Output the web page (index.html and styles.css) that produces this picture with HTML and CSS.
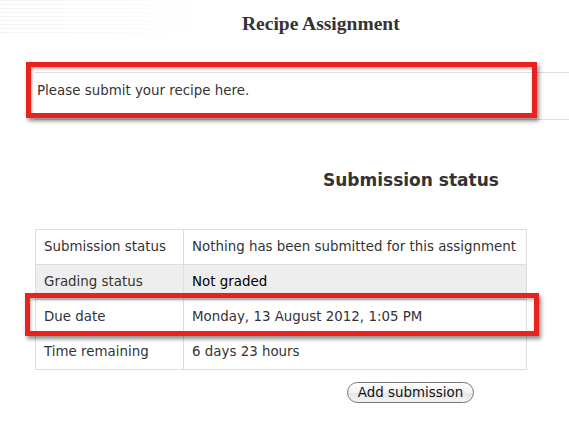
FILE: index.html
```html
<!DOCTYPE html>
<html lang="en">
<head>
    <meta charset="UTF-8">
    <title>Recipe Assignment</title>
    <link rel="stylesheet" href="styles.css">
</head>
<body>

    <!-- Assignment title -->
    <h2 class="page-title">Recipe Assignment</h2>

    <!-- Intro text, marked with a red box -->
    <div class="intro">
        <div class="intro-text">Please submit your recipe here.</div>
        <div class="mark mark-intro"></div>
    </div>

    <h3 class="status-heading">Submission status</h3>

    <!-- Status table -->
    <div class="table-wrap">
        <table class="status-table">
            <tr>
                <td class="label">Submission status</td>
                <td>Nothing has been submitted for this assignment</td>
            </tr>
            <tr class="shaded">
                <td class="label">Grading status</td>
                <td class="strong">Not graded</td>
            </tr>
            <tr>
                <td class="label">Due date</td>
                <td>Monday, 13 August 2012, 1:05 PM</td>
            </tr>
            <tr>
                <td class="label">Time remaining</td>
                <td>6 days 23 hours</td>
            </tr>
        </table>
        <div class="mark mark-due"></div>
    </div>

    <div class="actions">
        <button class="pill-button">Add submission</button>
    </div>

</body>
</html>
```

FILE: styles.css
```css
body {
    margin: 0;
    background-color: #fff;
    background-image:
        linear-gradient(to right, rgba(255,255,255,0), #fff 90%),
        repeating-linear-gradient(to bottom, #f3f3f3 0 1px, #fff 1px 4px);
    background-repeat: no-repeat;
    background-size: 230px 36px, 230px 36px;
    font-family: "DejaVu Sans", Verdana, sans-serif;
    font-size: 13.4px;
    color: #333;
}
.page-title {
    margin: 0;
    padding: 12px 0 0 242px;
    font-family: "Liberation Serif", "Times New Roman", serif;
    font-size: 19.5px;
    line-height: 24px;
    font-weight: bold;
    color: #333;
}
.intro {
    position: relative;
    margin: 36px 0 0 35px;
    height: 46px;
    border-top: 1px solid #ddd;
    border-bottom: 1px solid #ddd;
}
.intro-text {
    padding: 10px 0 0 2px;
    line-height: 16px;
}
.mark {
    position: absolute;
    border: 5px solid #e8221d;
    box-shadow: 2px 3px 4px rgba(0,0,0,0.45), inset 1px 2px 3px rgba(0,0,0,0.3);
}
.mark-intro {
    top: -11px;
    left: -9px;
    width: 501px;
    height: 46px;
}
.status-heading {
    margin: 0;
    padding: 49px 0 0 323px;
    font-size: 17px;
    line-height: 22px;
    font-weight: bold;
    color: #333;
}
.table-wrap {
    position: relative;
    margin: 38px 0 0 35px;
    width: 492px;
}
.status-table {
    width: 492px;
    border-collapse: collapse;
}
.status-table td {
    height: 34px;
    padding: 0 8px;
    border: 1px solid #ddd;
    line-height: 16px;
    white-space: nowrap;
}
.status-table td.label {
    width: 131px;
}
.status-table tr.shaded td {
    background: #eee;
}
.status-table td.strong {
    color: #000;
}
.mark-due {
    top: 64px;
    left: -10px;
    width: 504px;
    height: 33px;
}
.actions {
    padding: 12px 0 0 347px;
}
.pill-button {
    height: 21px;
    width: 127px;
    padding: 0;
    border: 1px solid #777;
    border-radius: 11px;
    background: linear-gradient(to bottom, #fff, #f2f2f2 50%, #e4e4e4 51%, #f4f4f4);
    font-family: "DejaVu Sans", Verdana, sans-serif;
    font-size: 13.4px;
    color: #111;
}
```
